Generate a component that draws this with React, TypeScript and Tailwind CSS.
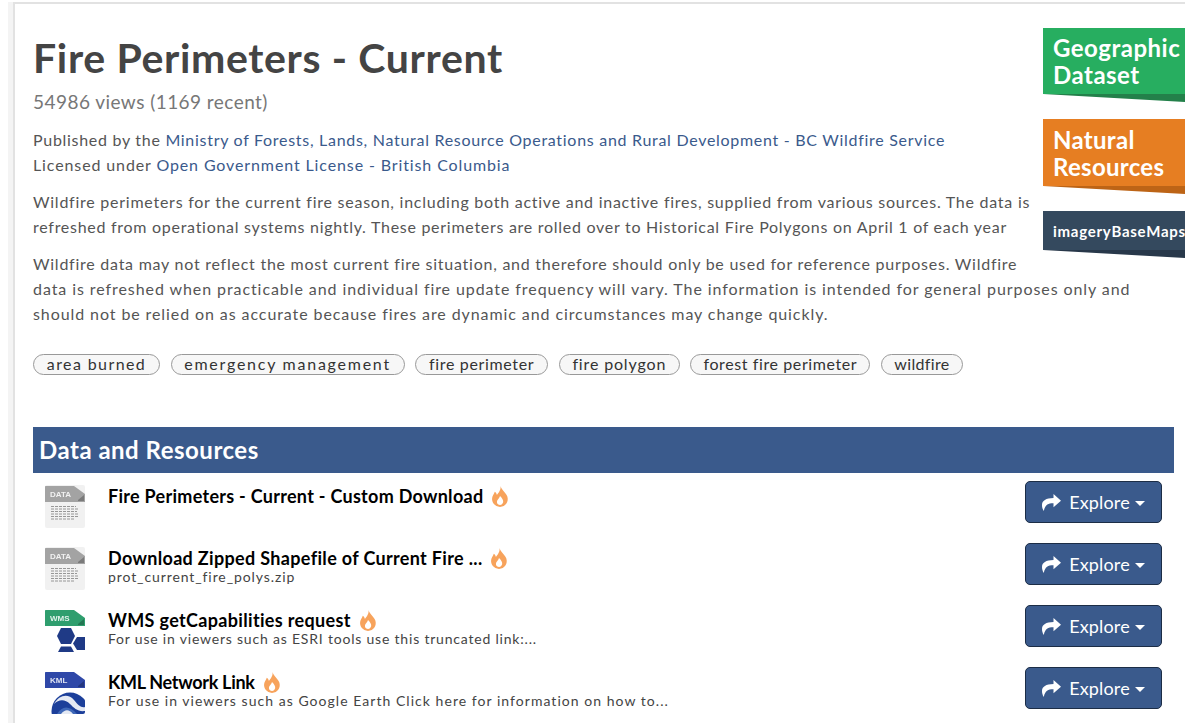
const tags = [
  { label: 'area burned', w: 'w-[127px]', track: 'tracking-[1.4px]' },
  { label: 'emergency management', w: 'w-[234px]', track: 'tracking-[1.75px]' },
  { label: 'fire perimeter', w: 'w-[133px]', track: 'tracking-[0.65px]' },
  { label: 'fire polygon', w: 'w-[121px]', track: 'tracking-[0.85px]' },
  { label: 'forest fire perimeter', w: 'w-[180px]', track: 'tracking-[0.6px]' },
  { label: 'wildfire', w: 'w-[82px]', track: 'tracking-[0.35px]' },
];

const ribbons = [
  { lines: ['Geographic', 'Dataset'], bg: 'bg-[#27ae60] h-[66px] pt-[6px] tracking-[0.5px]', fold: 'bg-[#23804a]' },
  { lines: ['Natural', 'Resources'], bg: 'bg-[#e67e22] h-[67px] pt-[7px] tracking-[0.3px]', fold: 'bg-[#bd6416]' },
];

function Flame() {
  return (
    <svg width="18" height="21" viewBox="0 0 17 20" className="ml-[8px] shrink-0">
      <path
        d="M9 0C10 4 14 6 15.5 10C17 15 14 19.5 8.5 20C3.5 19.5 0.5 16 1 11.5C1.3 9 3 7.5 3.5 5.5C5 6.5 5.5 8 5.5 8.5C7.5 6 9.5 3.5 9 0Z"
        fill="#f7a35c"
      />
      <path d="M8.5 18C6 18 5 15.5 6 13.5C7 12 8 11.5 8.5 9.5C10.5 11.5 12 13.5 11.5 15.5C11 17 10 18 8.5 18Z" fill="#fff" />
    </svg>
  );
}

function ShareArrow() {
  return (
    <svg width="19" height="17" viewBox="0 0 19 17" className="mr-[8px] shrink-0" fill="#fff">
      <path d="M11.5 0L19 6.8L11.5 13.2V9.3C6.5 9.2 3 10.6 1.8 17C0.4 14.8 0 12.8 0 11C0 6.5 4 4 11.5 3.9Z" />
    </svg>
  );
}

function FileIcon({ kind }: { kind: 'DATA' | 'WMS' | 'KML' }) {
  const head = kind === 'DATA' ? '#a3a3a3' : kind === 'WMS' ? '#2f9e6e' : '#2f48a8';
  return (
    <svg width="40" height="44" viewBox="0 0 40 44" className="shrink-0 mt-[4px] blur-[0.4px]">
      <defs>
        <clipPath id={`page-${kind}`}>
          <rect x="0" y="0" width="40" height="43" rx="2" />
        </clipPath>
      </defs>
      <g clipPath={`url(#page-${kind})`}>
        <rect width="40" height="43" fill={kind === 'DATA' ? '#f1f1f1' : '#fff'} />
        <path d="M0 1H29L40 9V17H0Z" fill={head} />
        <path d="M33 15L39 10V16H33Z" fill="#000" opacity="0.25" />
        <text x="5" y="12" fontSize="8" fontWeight="700" fill="#fff" fillOpacity="0.85" fontFamily="Liberation Sans, sans-serif">
          {kind}
        </text>
        {kind === 'DATA' && (
          <g stroke="#808080" strokeWidth="0.8" strokeDasharray="3 1">
            <path d="M6 21.5H31" />
            <path d="M6 24H33" />
            <path d="M6 26.5H32" />
            <path d="M6 29H33" />
            <path d="M6 31.5H34" />
            <path d="M6 34H30" />
          </g>
        )}
        {kind === 'WMS' && (
          <g fill="#1f3a86">
            <path d="M16 19H26L30 27L26 35H16L12 27Z" />
            <path d="M32 28H40V41H32L28 34.5Z" />
            <path d="M16 37.5H26L29 43H13Z" />
          </g>
        )}
        {kind === 'KML' && (
          <g>
            <circle cx="25" cy="40" r="18.5" fill="#1c3f9a" />
            <path d="M9 33C14 24 23 22 29 29C33 34 36 37 40 36V40C33 41 29 37 25 33C20 28 14 28 9 33Z" fill="#e4e9f3" />
            <path d="M12 43C17 35 24 34 32 43Z" fill="#3f68b8" />
            <path d="M16 43C20 38 24 38 28 43Z" fill="#e4e9f3" />
          </g>
        )}
      </g>
    </svg>
  );
}

function ExploreButton() {
  return (
    <button className="flex items-center justify-center w-[137px] h-[42px] shrink-0 bg-[#3a5a8c] border border-[#1c2d46] rounded-[5px] text-white text-[18px] tracking-[0.15px]">
      <ShareArrow />
      Explore
      <span className="ml-[5px] mt-[2px] border-x-[5.5px] border-x-transparent border-t-[5px] border-t-white" />
    </button>
  );
}

const resources = [
  { kind: 'DATA' as const, title: 'Fire Perimeters - Current - Custom Download', titleTrack: 'tracking-[0.28px]', sub: '', subTrack: '' },
  { kind: 'DATA' as const, title: 'Download Zipped Shapefile of Current Fire ...', titleTrack: 'tracking-[0.33px]', sub: 'prot_current_fire_polys.zip', subTrack: 'tracking-[0.9px]' },
  { kind: 'WMS' as const, title: 'WMS getCapabilities request', titleTrack: 'tracking-[0.33px]', sub: 'For use in viewers such as ESRI tools use this truncated link:...', subTrack: 'tracking-[0.8px]' },
  { kind: 'KML' as const, title: 'KML Network Link', titleTrack: 'tracking-[-0.3px]', sub: 'For use in viewers such as Google Earth Click here for information on how to...', subTrack: 'tracking-[1.04px]' },
];

export default function App() {
  return (
    <div className="h-[723px] w-[1185px] overflow-hidden bg-white pt-[2px] pl-[8px] font-['Lato',sans-serif] text-[#555]">
      <div className="h-full border-l-[5px] border-l-[#f4f4f4]">
        <div className="h-full border-l-2 border-t-2 border-[#e2e2e2] pl-[18px] pr-[10px] pt-[24px]">
          <div className="float-right -mr-[10px] ml-[13px] w-[142px]">
            {ribbons.map((r) => (
              <div key={r.lines[0]} className="mb-[17px]">
                <div className={`${r.bg} pl-[10px] text-white text-[24px] font-bold leading-[27px] whitespace-nowrap`}>
                  {r.lines.map((l) => (
                    <div key={l}>{l}</div>
                  ))}
                </div>
                <div className={`${r.fold} h-[8px] [clip-path:polygon(0_0,100%_0,100%_100%)]`} />
              </div>
            ))}
            <div className="bg-[#34495e] h-[39px] pl-[10px] pt-[2px] flex items-center text-white text-[15px] font-bold tracking-[0.75px] whitespace-nowrap">
              imageryBaseMaps
            </div>
            <div className="bg-[#28384a] h-[8px] [clip-path:polygon(0_0,100%_0,100%_100%)]" />
          </div>

          <h1 className="mt-[7px] text-[41px] leading-[46px] font-bold text-[#444] tracking-[0.65px]">Fire Perimeters - Current</h1>
          <p className="mt-[9px] text-[19px] leading-[24px] text-[#777] tracking-[0.45px]">54986 views (1169 recent)</p>

          <div className="mt-[13px] text-[16px] leading-[25px] whitespace-nowrap">
            <p className="tracking-[0.71px]">
              Published by the <span className="text-[#3a5a8c]">Ministry of Forests, Lands, Natural Resource Operations and Rural Development - BC Wildfire Service</span>
            </p>
            <p className="tracking-[0.88px]">
              Licensed under <span className="text-[#3a5a8c]">Open Government License - British Columbia</span>
            </p>
            <p className="mt-[12px]">
              <span className="tracking-[0.75px]">Wildfire perimeters for the current fire season, including both active and inactive fires, supplied from various sources. The data is</span>
              <br />
              <span className="tracking-[0.72px]">refreshed from operational systems nightly. These perimeters are rolled over to Historical Fire Polygons on April 1 of each year</span>
            </p>
            <p className="mt-[12px]">
              <span className="tracking-[0.75px]">Wildfire data may not reflect the most current fire situation, and therefore should only be used for reference purposes. Wildfire</span>
              <br />
              <span className="tracking-[0.92px]">data is refreshed when practicable and individual fire update frequency will vary. The information is intended for general purposes only and</span>
              <br />
              <span className="tracking-[0.91px]">should not be relied on as accurate because fires are dynamic and circumstances may change quickly.</span>
            </p>
          </div>

          <div className="mt-[28px] flex gap-[10.6px]">
            {tags.map((t) => (
              <span key={t.label} className={`${t.w} ${t.track} h-[21px] pb-[1px] flex items-center justify-center rounded-full border border-[#999] bg-[#f7f7f7] text-[16px] text-[#333] whitespace-nowrap`}>
                {t.label}
              </span>
            ))}
          </div>

          <h2 className="mt-[52px] h-[46px] w-[1141px] flex items-center pl-[6px] bg-[#3a5a8c] text-white text-[24px] font-bold tracking-[0.5px]">
            Data and Resources
          </h2>

          <ul className="w-[1141px] mt-[8px]">
            {resources.map((r) => (
              <li key={r.title} className="flex items-start h-[62px] pl-[12px] pr-[12px]">
                <FileIcon kind={r.kind} />
                <div className="ml-[23px] flex-1 min-w-0">
                  <div className={`${r.titleTrack} flex items-center text-[18px] leading-[22px] font-bold text-black mt-[4px]`}>
                    {r.title}
                    <Flame />
                  </div>
                  <div className={`${r.subTrack} text-[14px] leading-[16px] text-[#444]`}>{r.sub}</div>
                </div>
                <ExploreButton />
              </li>
            ))}
          </ul>
        </div>
      </div>
    </div>
  );
}
